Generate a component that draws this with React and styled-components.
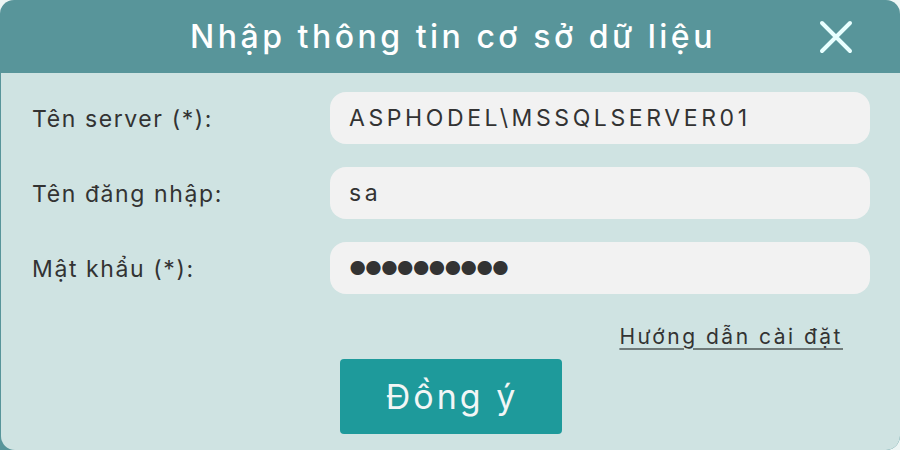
import React from "react";
import styled, { createGlobalStyle } from "styled-components";

const Global = createGlobalStyle`
  html, body { margin: 0; padding: 0; background: #eef6f5; }
  body { font-family: Inter, "Noto Sans", sans-serif; }
  * { box-sizing: border-box; }
`;

const Window = styled.div`
  width: 900px;
  height: 450px;
  background: #58959a;
  border-top-right-radius: 14px;
  border-bottom-right-radius: 14px;
  border-top-left-radius: 14px;
  display: flex;
  flex-direction: column;
  overflow: hidden;
`;

const Header = styled.div`
  height: 73px;
  flex: none;
  display: flex;
  align-items: center;
  justify-content: center;
  position: relative;
`;

const Title = styled.h1`
  margin: 0;
  color: #ffffff;
  font-size: 32px;
  font-weight: 500;
  letter-spacing: 3.5px;
  padding-left: 6px;
`;

const CloseButton = styled.button`
  position: absolute;
  right: 46px;
  top: 19px;
  width: 36px;
  height: 36px;
  padding: 0;
  border: none;
  background: transparent;
  display: flex;
  align-items: center;
  justify-content: center;
  cursor: pointer;
`;

const Body = styled.div`
  flex: 1;
  margin-left: 1px;
  background: #cfe3e2;
  border-bottom-left-radius: 14px;
  border-bottom-right-radius: 14px;
  padding: 19px 30px 0 31px;
  display: flex;
  flex-direction: column;
`;

const Form = styled.div`
  display: grid;
  grid-template-columns: 298px 540px;
  grid-auto-rows: 52px;
  row-gap: 23px;
  align-items: center;
`;

const Label = styled.label`
  color: #333333;
  font-size: 23px;
  font-weight: 400;
  letter-spacing: 1.6px;
  padding-top: 2px;
`;

const Field = styled.div`
  height: 52px;
  background: #f2f2f2;
  border-radius: 16px;
  display: flex;
  align-items: center;
  padding-left: 19px;
  color: #333333;
  font-size: ${(p) => (p.$dots ? "19px" : "23px")};
  letter-spacing: ${(p) => (p.$dots ? "-1.5px" : "3.6px")};
`;

const LinkRow = styled.div`
  display: flex;
  justify-content: flex-end;
  padding-right: 27px;
  margin-top: 30px;
`;

const HelpLink = styled.a`
  color: #333333;
  font-size: 21px;
  text-decoration: underline;
  text-decoration-color: #6f7a79;
  text-decoration-thickness: 2px;
  text-underline-offset: 4px;
  letter-spacing: 2.5px;
  cursor: pointer;
`;

const Footer = styled.div`
  display: flex;
  justify-content: center;
  margin-top: 10px;
  padding-right: 1px;
`;

const Submit = styled.button`
  width: 222px;
  height: 75px;
  border: none;
  border-radius: 4px;
  background: #1e9a9b;
  color: #f2f6f6;
  font-family: inherit;
  font-size: 34px;
  font-weight: 400;
  letter-spacing: 3px;
  padding: 0 0 0 3px;
  cursor: pointer;
`;

export default function App() {
  return (
    <>
      <Global />
      <Window>
        <Header>
          <Title>Nhập thông tin cơ sở dữ liệu</Title>
          <CloseButton aria-label="Đóng">
            <svg width="36" height="36" viewBox="0 0 36 36">
              <path
                d="M4 4 L32 32 M32 4 L4 32"
                stroke="#e8ffff"
                strokeWidth="4"
                strokeLinecap="round"
              />
            </svg>
          </CloseButton>
        </Header>
        <Body>
          <Form>
            <Label>Tên server (*):</Label>
            <Field>ASPHODEL\MSSQLSERVER01</Field>
            <Label>Tên đăng nhập:</Label>
            <Field>sa</Field>
            <Label>Mật khẩu (*):</Label>
            <Field $dots>●●●●●●●●●●</Field>
          </Form>
          <LinkRow>
            <HelpLink>Hướng dẫn cài đặt</HelpLink>
          </LinkRow>
          <Footer>
            <Submit>Đồng ý</Submit>
          </Footer>
        </Body>
      </Window>
    </>
  );
}
